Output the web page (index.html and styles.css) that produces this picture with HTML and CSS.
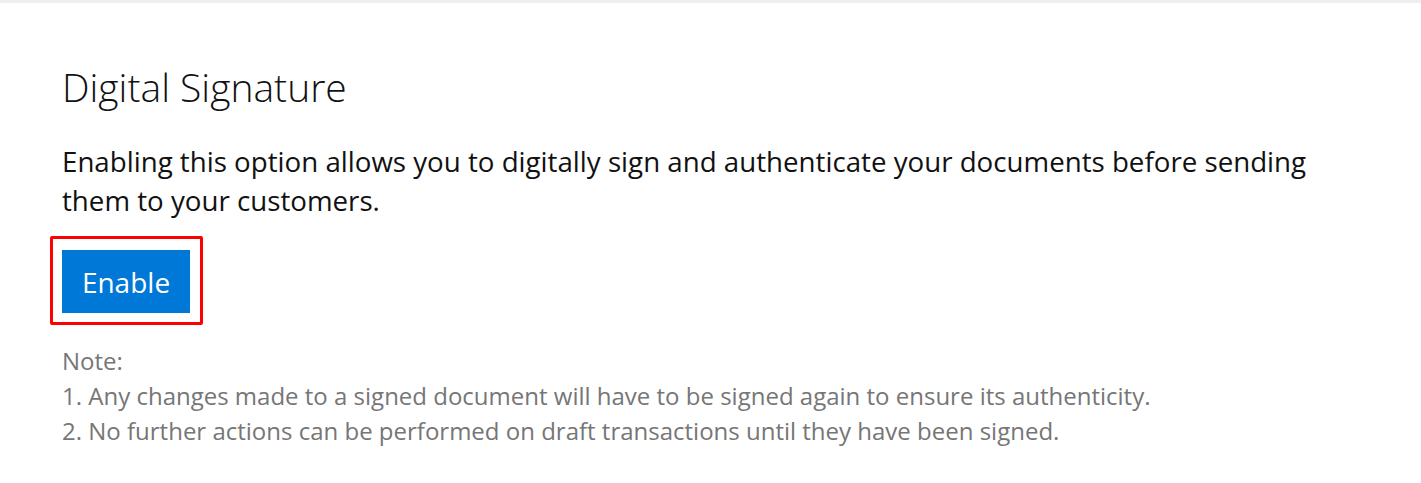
FILE: index.html
```html
<!DOCTYPE html>
<html lang="en">
<head>
  <meta charset="UTF-8">
  <meta name="viewport" content="width=device-width, initial-scale=1.0">
  <title>Digital Signature</title>
  <link rel="stylesheet" href="styles.css">
</head>
<body>
  <div class="topbar"></div>
  <div class="container">
    <h1>Digital Signature</h1>
    <p class="intro">Enabling this option allows you to digitally sign and authenticate your documents before sending them to your customers.</p>

    <div class="highlight">
      <button type="button" class="btn-primary">Enable</button>
    </div>

    <div class="note">
      <p>Note:</p>
      <p>1. Any changes made to a signed document will have to be signed again to ensure its authenticity.</p>
      <p>2. No further actions can be performed on draft transactions until they have been signed.</p>
    </div>
  </div>
</body>
</html>
```

FILE: styles.css
```css
body {
  margin: 0;
  font-family: "Open Sans", "Noto Sans", sans-serif;
  background: #fff;
  color: #000;
}
.topbar {
  height: 3px;
  background: #eeeeee;
}
.container {
  padding: 60px 62px 30px 62px;
  max-width: 1280px;
}
h1 {
  font-weight: 300;
  font-size: 39px;
  line-height: 48px;
  margin: 0 0 31px 0;
  color: #111;
}
.intro {
  font-size: 27.7px;
  line-height: 39px;
  margin: 0 0 16px 0;
  color: #111;
}
.highlight {
  display: inline-block;
  border: 3px solid #ff0000;
  border-radius: 2px;
  padding: 11px 10px 9px 9px;
  margin-left: -12px;
}
.btn-primary {
  display: block;
  background: #0078d7;
  color: #fff;
  border: none;
  font-family: inherit;
  font-size: 28px;
  width: 128px;
  height: 63px;
  padding: 0;
  cursor: pointer;
}
.note {
  margin-top: 18px;
  color: #767676;
  font-size: 24px;
  line-height: 35px;
}
.note p {
  margin: 0;
}
```
